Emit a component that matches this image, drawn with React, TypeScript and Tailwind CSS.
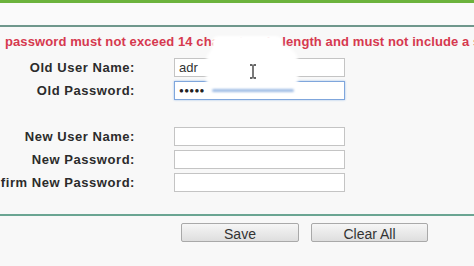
import React from "react";

const font = "font-['Liberation_Sans',Arial,sans-serif]";

function Row({ label, value, focused, dots }: { label: string; value?: string; focused?: boolean; dots?: boolean }) {
  return (
    <div className="flex h-[19px] items-center">
      <div className="flex w-[135px] shrink-0 justify-end">
        <span className="whitespace-nowrap text-[13px] font-bold tracking-[0.55px] text-[#2b2b2b]">{label}</span>
      </div>
      <div
        className={
          "ml-[39px] flex h-[19px] w-[171px] items-center bg-white px-[4px] text-[13px] text-[#333] " +
          (focused
            ? "border border-[#7fa6dc] shadow-[0_0_2px_#9fc0ea]"
            : "border border-[#c4c4c4]")
        }
      >
        {dots ? <span className="text-[8px] tracking-[0.3px] text-[#222]">●●●●●</span> : value}
      </div>
    </div>
  );
}

export default function App() {
  return (
    <div className={`relative h-[266px] w-[474px] overflow-hidden bg-[#f8f8f8] ${font}`}>
      <div className="h-[3px] bg-[#6cb33d]" />
      <div className="h-[22px] bg-[#fafafa]" />
      <div className="h-[2px] bg-[#6f978c]" />

      <p className="ml-[5px] mt-[7px] whitespace-nowrap text-[13px] font-bold leading-[16px] tracking-[0.1px] text-[#d6394f]">
        password must not exceed 14 characters in length and must not include a space.
      </p>

      <div className="mt-[8px] flex flex-col gap-[4px]">
        <Row label="Old User Name:" value="adr" />
        <Row label="Old Password:" focused dots />
        <div className="h-[19px]" />
        <Row label="New User Name:" />
        <Row label="New Password:" />
        <Row label="Confirm New Password:" />
      </div>

      <div className="mt-[22px] h-[2px] bg-[#6aa592]" />

      <div className="mt-[7px] flex gap-[12px] pl-[181px]">
        <button className="h-[19px] w-[118px] rounded-[2px] border border-[#a9a9a9] bg-gradient-to-b from-[#f6f6f6] to-[#dedede] text-[14px] text-[#333]">
          Save
        </button>
        <button className="h-[19px] w-[117px] rounded-[2px] border border-[#a9a9a9] bg-gradient-to-b from-[#f6f6f6] to-[#dedede] text-[14px] text-[#333]">
          Clear All
        </button>
      </div>

      {/* glare from the video capture */}
      <div className="absolute left-[212px] top-[36px] h-[20px] w-[70px] rounded-[6px] bg-white blur-[1px]" />
      <div className="absolute left-[206px] top-[46px] h-[49px] w-[92px] rounded-[16px] bg-white blur-[1.5px]" />
      <div className="absolute left-[212px] top-[89px] h-[3px] w-[82px] rounded-full bg-[#9dbbe4] blur-[1px]" />
      <svg className="absolute left-[249px] top-[64px]" width="8" height="15" viewBox="0 0 8 15">
        <path d="M1 1h2.5M4.5 1H7M4 1.5v12M1 14h2.5M4.5 14H7" stroke="#333" strokeWidth="1.3" fill="none" />
      </svg>
    </div>
  );
}
